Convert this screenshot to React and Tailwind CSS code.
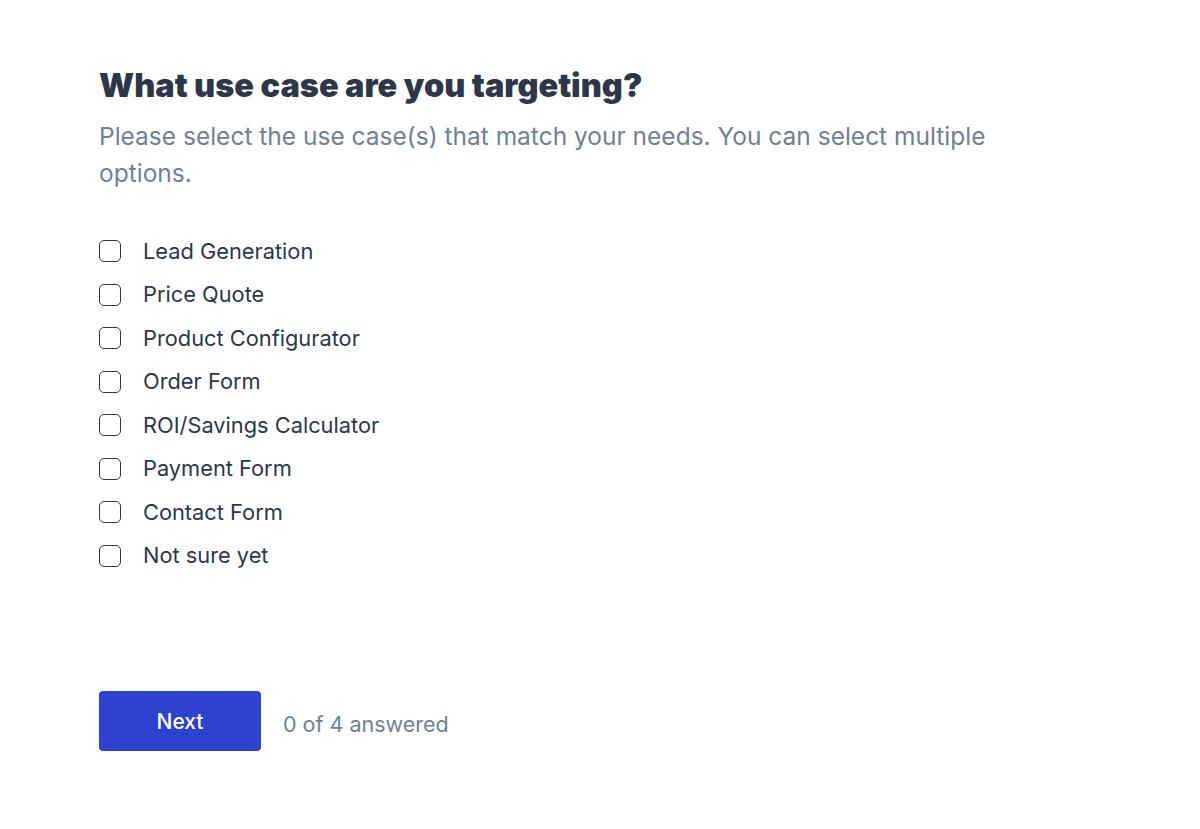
import React from "react";

const options = [
  "Lead Generation",
  "Price Quote",
  "Product Configurator",
  "Order Form",
  "ROI/Savings Calculator",
  "Payment Form",
  "Contact Form",
  "Not sure yet",
];

export default function App() {
  return (
    <div
      className="min-h-screen bg-white pl-[99px] pr-[100px] pt-[64px]"
      style={{ fontFamily: "Inter, 'Noto Sans', sans-serif" }}
    >
      <h1 className="text-[32.5px] leading-[44px] font-black text-[#2d3748]">
        What use case are you targeting?
      </h1>
      <p className="mt-[10px] max-w-[900px] text-[24.5px] leading-[37px] text-[#718096]">
        Please select the use case(s) that match your needs. You can select multiple options.
      </p>
      <div className="mt-[48px] flex flex-col gap-[21.5px]">
        {options.map((o) => (
          <label key={o} className="flex items-center gap-[22px] h-[22px]">
            <span className="w-[22px] h-[22px] rounded-[5px] border-[1.5px] border-[#2d3748] bg-white shrink-0" />
            <span className="text-[21.8px] text-[#2d3748]">{o}</span>
          </label>
        ))}
      </div>
      <div className="mt-[124px] flex items-center gap-[22px]">
        <button className="w-[162px] h-[60px] rounded-[4px] bg-[#2d43d0] text-white text-[21px] font-medium pt-[2px]">
          Next
        </button>
        <span className="text-[21.5px] text-[#718096] mt-[7px]">0 of 4 answered</span>
      </div>
    </div>
  );
}
